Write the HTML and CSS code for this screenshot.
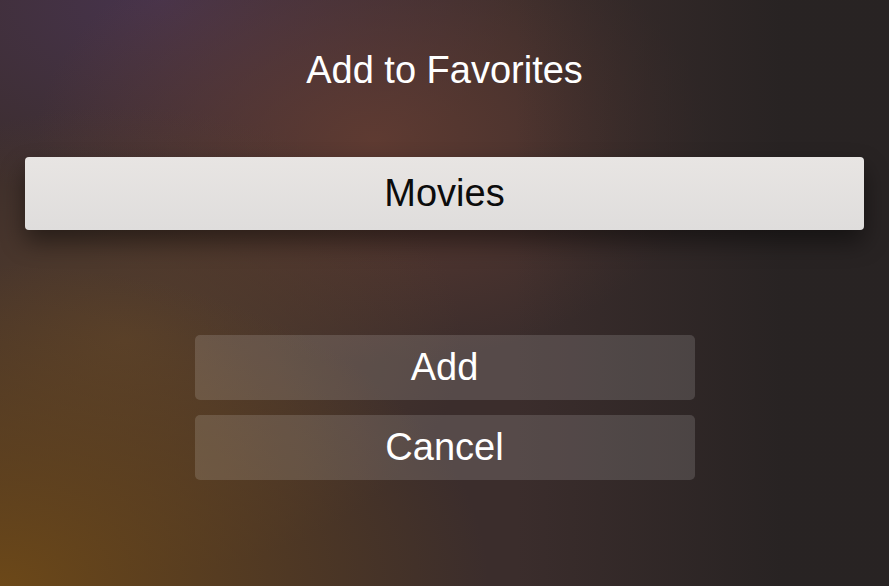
FILE: index.html
```html
<!DOCTYPE html>
<html lang="en">
<head>
<meta charset="UTF-8" />
<meta name="viewport" content="width=device-width,initial-scale=1" />
<title>Add to Favorites</title>
<link rel="stylesheet" href="styles.css">
</head>
<body>
  <main class="alert">
    <h1 class="alert-title">Add to Favorites</h1>

    <!-- selected list -->
    <div class="picker">
      <div class="picker-item">Movies</div>
    </div>

    <!-- actions -->
    <div class="actions">
      <button class="btn">Add</button>
      <button class="btn">Cancel</button>
    </div>
  </main>
</body>
</html>
```

FILE: styles.css
```css
/* ---------- Base ---------- */
* { box-sizing: border-box; }
html, body { height: 100%; }
body {
  margin: 0;
  font-family: "Liberation Sans", Arial, sans-serif;
  color: #fff;
  background-color: #3b2d2c;
  background-image:
    linear-gradient(90deg, rgba(38, 34, 34, 0) 58%, rgba(38, 34, 34, 0.9) 88%),
    radial-gradient(ellipse 55% 55% at 0% 100%, rgba(108, 72, 24, 1), rgba(108, 72, 24, 0) 100%),
    radial-gradient(ellipse 38% 40% at 14% 58%, rgba(88, 64, 44, 0.9), rgba(88, 64, 44, 0) 100%),
    radial-gradient(ellipse 38% 38% at 42% 24%, rgba(98, 60, 50, 0.9), rgba(98, 60, 50, 0) 100%),
    radial-gradient(ellipse 40% 35% at 18% 0%, rgba(72, 52, 80, 0.9), rgba(72, 52, 80, 0) 100%);
  overflow: hidden;
}

/* ---------- Layout ---------- */
.alert {
  display: flex;
  flex-direction: column;
  align-items: center;
  padding: 48px 25px 0;
}
.alert-title {
  margin: 0;
  font-size: 38px;
  font-weight: 400;
  line-height: 44px;
}

.picker {
  width: 100%;
  margin-top: 65px;
}
.picker-item {
  height: 73px;
  display: flex;
  align-items: center;
  justify-content: center;
  background: linear-gradient(180deg, #e8e5e3, #dfdddc);
  color: #0c0c0c;
  font-size: 38px;
  border-radius: 4px;
  box-shadow: 0 12px 24px rgba(0, 0, 0, 0.45);
}

.actions {
  display: flex;
  flex-direction: column;
  gap: 15px;
  margin-top: 105px;
  width: 500px;
}
.btn {
  height: 65px;
  border: 0;
  border-radius: 5px;
  background: rgba(255, 255, 255, 0.14);
  color: #fff;
  font-family: inherit;
  font-size: 38px;
  cursor: pointer;
}
```
